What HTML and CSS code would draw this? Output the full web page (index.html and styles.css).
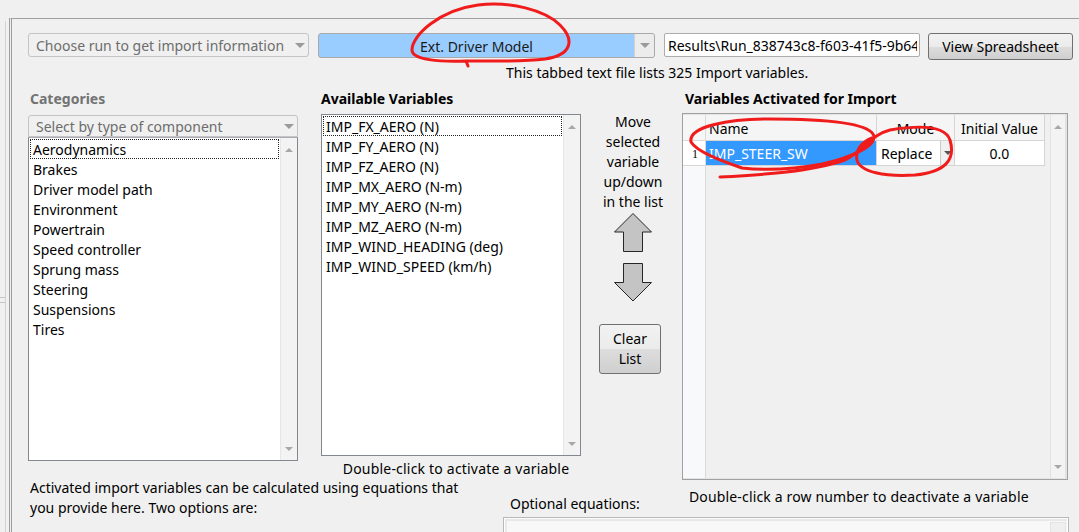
FILE: index.html
```html
<!DOCTYPE html>
<html>
<head>
<meta charset="utf-8">
<link rel="stylesheet" href="styles.css">
</head>
<body>
<div class="page">
  <div class="strip"><div class="notch"></div></div>
  <div class="frame">
    <div class="toprow">
      <div class="combo gray run"><span class="ctext">Choose run to get import information</span><i class="caret"></i></div>
      <div class="combo blue"><span class="ctext center">Ext. Driver Model</span><span class="drop"><i class="caret"></i></span></div>
      <div class="textfield"><span class="tfclip">Results\Run_838743c8-f603-41f5-9b64</span></div>
      <div class="btn view">View Spreadsheet</div>
    </div>
    <div class="info">This tabbed text file lists 325 Import variables.</div>

    <div class="main">
      <div class="colA">
        <div class="head gray">Categories</div>
        <div class="combo gray cat"><span class="ctext">Select by type of component</span><i class="caret"></i></div>
        <div class="list listA">
          <div class="items">
            <div class="item focus">Aerodynamics</div>
            <div class="item">Brakes</div>
            <div class="item">Driver model path</div>
            <div class="item">Environment</div>
            <div class="item">Powertrain</div>
            <div class="item">Speed controller</div>
            <div class="item">Sprung mass</div>
            <div class="item">Steering</div>
            <div class="item">Suspensions</div>
            <div class="item">Tires</div>
          </div>
          <div class="vscroll"><i class="up"></i><i class="down"></i></div>
        </div>
      </div>

      <div class="colB">
        <div class="head">Available Variables</div>
        <div class="list listB">
          <div class="items">
            <div class="item focus">IMP_FX_AERO (N)</div>
            <div class="item">IMP_FY_AERO (N)</div>
            <div class="item">IMP_FZ_AERO (N)</div>
            <div class="item">IMP_MX_AERO (N-m)</div>
            <div class="item">IMP_MY_AERO (N-m)</div>
            <div class="item">IMP_MZ_AERO (N-m)</div>
            <div class="item">IMP_WIND_HEADING (deg)</div>
            <div class="item">IMP_WIND_SPEED (km/h)</div>
          </div>
          <div class="vscroll"><i class="up"></i><i class="down"></i></div>
        </div>
        <div class="caption">Double-click to activate a variable</div>
      </div>

      <div class="colC">
        <div class="movetext">Move<br>selected<br>variable<br>up/down<br>in the list</div>
        <svg class="arrow up-arrow" width="38" height="39" viewBox="0 0 38 39"><polygon points="19,0.5 37.5,19 28.5,19 28.5,38.5 9.5,38.5 9.5,19 0.5,19" fill="#c4c4c4" stroke="#262626" stroke-width="1"/></svg>
        <svg class="arrow down-arrow" width="38" height="39" viewBox="0 0 38 39"><polygon points="9.5,0.5 28.5,0.5 28.5,19.5 37.5,19.5 19,38 0.5,19.5 9.5,19.5" fill="#c4c4c4" stroke="#262626" stroke-width="1"/></svg>
        <div class="btn clear">Clear<br>List</div>
      </div>

      <div class="colD">
        <div class="head pad">Variables Activated for Import</div>
        <div class="tbl">
          <div class="rowhdr">
            <div class="rh-head"></div>
            <div class="rh-1">1</div>
          </div>
          <div class="cols">
            <div class="hrow">
              <div class="hcell c-name">Name</div>
              <div class="hcell c-mode center">Mode</div>
              <div class="hcell c-init center">Initial Value</div>
            </div>
            <div class="drow">
              <div class="dcell c-name sel">IMP_STEER_SW</div>
              <div class="dcell c-mode"><span class="mtext">Replace</span><span class="mdrop"><i class="caret small"></i></span></div>
              <div class="dcell c-init center">0.0</div>
            </div>
          </div>
          <div class="tfill"></div>
          <div class="vscroll tscroll"><i class="up"></i><i class="down"></i></div>
        </div>
      </div>
    </div>

    <div class="bottom">
      <div class="bleft">Activated import variables can be calculated using equations that<br>you provide here. Two options are:</div>
      <div class="bright">
        <div class="brow">
          <div class="optlabel">Optional equations:</div>
          <div class="dcap">Double-click a row number to deactivate a variable</div>
        </div>
        <div class="eqbox"><div class="eqscroll"></div></div>
      </div>
    </div>
  </div>

  <svg class="marks" width="1079" height="532" viewBox="0 0 1079 532">
    <g fill="none" stroke="#f01c1c" stroke-width="3" stroke-linecap="round" stroke-linejoin="round">
      <path d="M 468 66 L 466 61 C 440 62, 412 60, 412 50 C 412 35, 440 10, 478 5 C 510 1, 545 10, 560 25 C 575 40, 572 55, 545 59 C 520 62, 490 61, 466 61"/>
      <path d="M 742 168 C 722 161, 697 152, 691 142 C 688 126, 730 119, 770 119 C 820 119, 865 122, 873 134 C 880 145, 850 158, 822 164 C 790 170, 760 170, 742 168"/>
      <path d="M 720 177 C 760 175, 810 172, 845 160 C 865 150, 870 135, 890 130 C 920 125, 945 125, 950 140 C 956 160, 945 172, 915 175 C 885 177, 860 172, 857 160 C 855 150, 862 142, 872 138"/>
    </g>
  </svg>
</div>
</body>
</html>
```

FILE: styles.css
```css
* { box-sizing: border-box; }

body {
  margin: 0;
  background: #f0f0f0;
  font-family: "Noto Sans", "DejaVu Sans", sans-serif;
  font-size: 14px;
  color: #000;
}

.page {
  position: relative;
  width: 1079px;
  height: 532px;
  overflow: hidden;
  display: flex;
}

/* left edge */
.strip {
  width: 6px;
  margin-top: 21px;
  margin-right: 3px;
  border-right: 1px solid #d2d2d2;
  flex: none;
}
.notch {
  margin-top: 276px;
  height: 6px;
  border-top: 1px solid #c4c4c4;
  border-bottom: 1px solid #c4c4c4;
}

.frame {
  flex: 1;
  margin-top: 18px;
  border-top: 1px solid #a0a0a0;
  border-left: 3px double #9d9d9d;
  padding-left: 16px;
  min-width: 0;
}

/* top row */
.toprow {
  display: flex;
  align-items: flex-start;
  margin-top: 14px;
  height: 27px;
}

.combo {
  height: 24px;
  border: 1px solid #acacac;
  border-radius: 3px;
  display: flex;
  align-items: center;
  flex: none;
}
.combo.gray {
  background: #f0f0f0;
  border-color: #c4c4c4;
  color: #6d6d6d;
  padding-left: 7px;
  padding-right: 3px;
}
.combo .ctext { flex: 1; white-space: nowrap; overflow: hidden; padding-top: 1px; }
.combo .ctext.center { text-align: center; }

.caret {
  display: block;
  width: 0;
  height: 0;
  border-left: 5px solid transparent;
  border-right: 5px solid transparent;
  border-top: 5px solid #9a9a9a;
}
.caret.small {
  border-left-width: 4px;
  border-right-width: 4px;
  border-top: 4px solid #555;
}

.run { width: 281px; }

.combo.blue {
  margin-left: 9px;
  width: 337px;
  height: 25px;
  background: #99ccff;
  border-color: #a9a9a9;
  overflow: hidden;
}
.combo.blue .ctext { color: #1a1a1a; }
.drop {
  width: 20px;
  align-self: stretch;
  background: #ececec;
  border-left: 1px solid #d0d0d0;
  display: flex;
  align-items: center;
  justify-content: center;
}

.textfield {
  margin-left: 9px;
  width: 256px;
  height: 24px;
  background: #fff;
  border: 1px solid #acacac;
  border-radius: 2px;
  padding-left: 3px;
  line-height: 23px;
  flex: none;
  display: flex;
}
.tfclip {
  display: block;
  width: 249px;
  white-space: nowrap;
  overflow: hidden;
}

.btn {
  border: 1px solid #707070;
  border-radius: 3px;
  background: linear-gradient(#f2f2f2 0%, #ebebeb 50%, #dddddd 50%, #cfcfcf 100%);
  text-align: center;
  flex: none;
}
.view {
  margin-left: 8px;
  width: 145px;
  height: 27px;
  line-height: 26px;
}

.info {
  margin-top: 3px;
  margin-left: 478px;
  line-height: 20px;
  height: 20px;
  white-space: nowrap;
}

/* main grid */
.main {
  display: grid;
  grid-template-columns: 270px 23px 260px 101px 386px;
  margin-top: 6px;
}
.colA { grid-column: 1; }
.colB { grid-column: 3; }
.colC { grid-column: 4; display: flex; flex-direction: column; align-items: center; }
.colD { grid-column: 5; }

.head {
  font-weight: bold;
  line-height: 20px;
  height: 20px;
  white-space: nowrap;
}
.head.gray { color: #737373; padding-left: 2px; }
.head.pad { padding-left: 3px; }

.combo.cat {
  margin-top: 6px;
  width: 270px;
  height: 22px;
  border-radius: 3px 3px 0 0;
}

.list {
  background: #fff;
  border: 1px solid #828790;
  display: flex;
}
.listA { height: 324px; border-top-color: #abadb3; }
.listB { height: 342px; margin-top: 5px; }

.items { flex: 1; padding: 1px; }
.item {
  height: 20px;
  line-height: 21px;
  padding-left: 3px;
  white-space: nowrap;
}
.item.focus { outline: 1px dotted #222; outline-offset: -1px; }

.vscroll {
  width: 17px;
  flex: none;
  background: #f3f3f3;
  border-left: 1px solid #e6e6e6;
  display: flex;
  flex-direction: column;
  align-items: center;
  justify-content: space-between;
  padding: 10px 0 9px;
}
.up {
  display: block;
  width: 0; height: 0;
  border-left: 4px solid transparent;
  border-right: 4px solid transparent;
  border-bottom: 4px solid #a8a8a8;
}
.down {
  display: block;
  width: 0; height: 0;
  border-left: 4px solid transparent;
  border-right: 4px solid transparent;
  border-top: 4px solid #a8a8a8;
}

.caption {
  margin-top: 3px;
  line-height: 20px;
  padding-left: 10px;
  text-align: center;
  white-space: nowrap;
  letter-spacing: 0.2px;
}

/* middle column */
.movetext {
  margin-top: 23px;
  line-height: 20px;
  text-align: center;
  margin-left: 3px;
}
.arrow { display: block; margin-left: 3px; }
.up-arrow { margin-top: 1px; }
.down-arrow { margin-top: 11px; }
.clear {
  margin-top: 22px;
  width: 62px;
  height: 50px;
  line-height: 20px;
  padding-top: 4px;
  margin-right: 3px;
}

/* table */
.tbl {
  margin-top: 4px;
  height: 367px;
  border: 1px solid #a0a0a0;
  box-shadow: inset 0 0 0 1px #e4e4e4;
  background: #f0f0f0;
  padding: 1px 1px 1px 0;
  display: flex;
}
.rowhdr {
  width: 23px;
  flex: none;
  background: #f7f9fb;
  border-right: 1px solid #dadada;
}
.rh-head {
  height: 26px;
  border-bottom: 1px solid #d8d8d8;
  background: #f6f6f6;
}
.rh-1 {
  height: 25px;
  border-bottom: 1px solid #d8d8d8;
  background: #fff;
  font-family: "Liberation Serif", serif;
  font-size: 12px;
  line-height: 26px;
  padding-left: 9px;
  color: #000;
}
.cols { width: 339px; flex: none; }
.hrow, .drow { display: flex; }
.hrow { height: 26px; }
.drow { height: 25px; }
.hcell, .dcell {
  border-right: 1px solid #d5d5d5;
  border-bottom: 1px solid #d5d5d5;
  white-space: nowrap;
  overflow: hidden;
}
.hcell { background: #f5f5f5; line-height: 27px; }
.dcell { background: #fff; line-height: 26px; }
.c-name { width: 171px; padding-left: 3px; }
.c-mode { width: 78px; }
.c-init { width: 90px; }
.center { text-align: center; }
.sel { background: #3399ff; color: #fff; }
.dcell.c-mode { display: flex; }
.mtext { flex: 1; padding-left: 4px; }
.mdrop {
  width: 14px;
  background: #f0f0f0;
  border-left: 1px solid #c8c8c8;
  display: flex;
  align-items: center;
  justify-content: center;
}
.tfill { flex: 1; }
.tscroll {
  width: 16px;
  border-left: 1px solid #e2e2e2;
  border-right: 1px solid #e2e2e2;
  padding: 10px 0 9px;
}

/* bottom */
.bottom {
  display: flex;
  margin-top: -2px;
}
.bleft {
  width: 475px;
  flex: none;
  padding-left: 2px;
  line-height: 20px;
  white-space: nowrap;
}
.bright { width: 566px; flex: none; }
.brow { display: flex; align-items: flex-start; height: 36px; }
.optlabel {
  width: 186px;
  flex: none;
  padding-left: 7px;
  margin-top: 16px;
  line-height: 20px;
  white-space: nowrap;
}
.dcap {
  margin-top: 9px;
  line-height: 20px;
  white-space: nowrap;
  letter-spacing: 0.15px;
}
.eqbox {
  margin-top: 3px;
  height: 20px;
  border: 1px solid #b8b8b8;
  box-shadow: inset 0 0 0 1px #fdfdfd, inset 2px 2px 0 1px #e8e8e8;
  background: #f8f8f8;
  display: flex;
  justify-content: flex-end;
}
.eqscroll {
  width: 16px;
  margin: 4px 2px 0 0;
  background: #efefef;
  border: 1px solid #e4e4e4;
}

/* hand-drawn annotations */
.marks {
  position: absolute;
  left: 0;
  top: 0;
  pointer-events: none;
}
```
